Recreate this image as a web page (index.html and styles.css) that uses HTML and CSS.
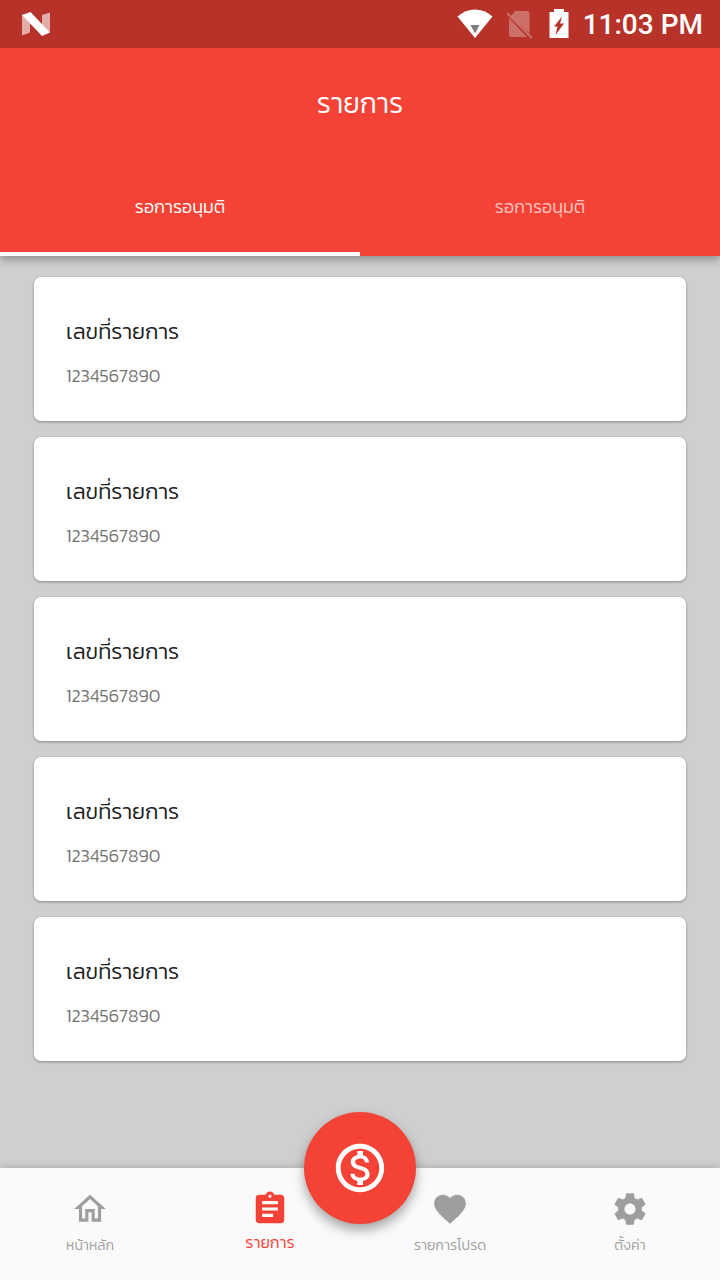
FILE: index.html
```html
<!DOCTYPE html>
<html lang="th">
<head>
<meta charset="utf-8">
<meta name="viewport" content="width=device-width, initial-scale=1">
<title>รายการ</title>
<link rel="stylesheet" href="styles.css">
</head>
<body>
<div class="app">
  <div class="status">
    <svg class="status-logo" width="30" height="26" viewBox="0 0 30 26" aria-hidden="true">
      <path d="M1 2v21.500l8-3V8z" fill="#fff" opacity=".6"/>
      <path d="M29 .5v20l-8-6V3z" fill="#fff" opacity=".6"/>
      <path d="M1 3l8.500-3L29 20.500 21 24z" fill="#fff"/>
    </svg>
    <div class="status-icons">
      <svg width="36" height="30" viewBox="0 0 36 30" aria-hidden="true">
        <path d="M.5 7.500C11-1.800 25-1.800 35.500 7.500L18 29z" fill="#fff"/>
        <path d="M13.500 16h9L18 24.500z" fill="#7d7f80"/>
      </svg>
      <svg width="28" height="30" viewBox="2 0 28 30" aria-hidden="true">
        <path d="M6 7l4-5h12a2.500 2.500 0 0 1 2.500 2.500V24.500zM4 9l18 19H6.500A2.500 2.500 0 0 1 4 25.500z" fill="#fff" opacity=".3"/>
        <path d="M2 4l25 25" fill="none" stroke="#fff" stroke-width="2" opacity=".3"/>
      </svg>
      <svg width="20" height="30" viewBox="0 0 20 30" aria-hidden="true">
        <path fill-rule="evenodd" d="M5 0h10v3h4.500V29H.5V3H5zM13 7.500L5 17.500h3.500L6.500 26 15 14.500h-4z" fill="#fff"/>
      </svg>
      <time class="clock">11:03 PM</time>
    </div>
  </div>

  <header class="header">
    <h1 class="title">รายการ</h1>
    <div class="tabs" role="tablist">
      <button class="tab tab-active" type="button" role="tab" aria-selected="true">รอการอนุมติ</button>
      <button class="tab" type="button" role="tab" aria-selected="false">รอการอนุมติ</button>
    </div>
  </header>

  <main class="content">
    <article class="card"><h2 class="card-title">เลขที่รายการ</h2><p class="card-text">1234567890</p></article>
    <article class="card"><h2 class="card-title">เลขที่รายการ</h2><p class="card-text">1234567890</p></article>
    <article class="card"><h2 class="card-title">เลขที่รายการ</h2><p class="card-text">1234567890</p></article>
    <article class="card"><h2 class="card-title">เลขที่รายการ</h2><p class="card-text">1234567890</p></article>
    <article class="card"><h2 class="card-title">เลขที่รายการ</h2><p class="card-text">1234567890</p></article>
  </main>

  <nav class="nav">
    <a class="nav-item" href="#home">
      <svg class="nav-icon" viewBox="0 0 24 24" aria-hidden="true"><path d="M12 5.690l5 4.500V18h-2v-6H9v6H7v-7.810l5-4.500M12 3L2 12h3v8h6v-6h2v6h6v-8h3L12 3z"/></svg>
      <span>หน้าหลัก</span>
    </a>
    <a class="nav-item nav-active" href="#list" aria-current="page">
      <svg class="nav-icon" viewBox="0 0 24 24" aria-hidden="true"><path d="M19 3h-4.180C14.400 1.840 13.300 1 12 1c-1.300 0-2.400.84-2.820 2H5c-1.100 0-2 .9-2 2v14c0 1.100.9 2 2 2h14c1.100 0 2-.9 2-2V5c0-1.100-.9-2-2-2zm-7 0c.55 0 1 .45 1 1s-.45 1-1 1-1-.45-1-1 .45-1 1-1zm2 14H7v-2h7v2zm3-4H7v-2h10v2zm0-4H7V7h10v2z"/></svg>
      <span>รายการ</span>
    </a>
    <a class="nav-item" href="#favorites">
      <svg class="nav-icon" viewBox="0 0 24 24" aria-hidden="true"><path d="M12 21.350l-1.450-1.320C5.400 15.360 2 12.280 2 8.500 2 5.420 4.420 3 7.500 3c1.740 0 3.410.81 4.500 2.090C13.090 3.810 14.760 3 16.500 3 19.580 3 22 5.420 22 8.500c0 3.780-3.400 6.860-8.550 11.540L12 21.350z"/></svg>
      <span>รายการโปรด</span>
    </a>
    <a class="nav-item" href="#settings">
      <svg class="nav-icon" viewBox="0 0 24 24" aria-hidden="true"><path d="M19.430 12.980c.04-.32.07-.64.07-.98s-.03-.66-.07-.98l2.110-1.650c.19-.15.24-.42.12-.64l-2-3.460c-.12-.22-.39-.3-.61-.22l-2.490 1c-.52-.4-1.080-.73-1.690-.98l-.38-2.650C14.460 2.180 14.250 2 14 2h-4c-.25 0-.46.18-.49.42l-.38 2.650c-.61.25-1.170.59-1.690.98l-2.490-1c-.23-.09-.49 0-.61.22l-2 3.460c-.13.22-.07.49.12.64l2.110 1.650c-.04.32-.07.65-.07.98s.03.66.07.98l-2.110 1.650c-.19.15-.24.42-.12.64l2 3.460c.12.22.39.3.61.22l2.490-1c.52.4 1.080.73 1.690.98l.38 2.650c.03.24.24.42.49.42h4c.25 0 .46-.18.49-.42l.38-2.650c.61-.25 1.170-.59 1.690-.98l2.490 1c.23.09.49 0 .61-.22l2-3.460c.12-.22.07-.49-.12-.64l-2.110-1.650zM12 15.500c-1.930 0-3.500-1.570-3.500-3.500s1.570-3.500 3.500-3.500 3.500 1.570 3.500 3.500-1.570 3.500-3.500 3.500z"/></svg>
      <span>ตั้งค่า</span>
    </a>
    <button class="fab" type="button" aria-label="ชำระเงิน">
      <svg class="fab-icon" viewBox="0 0 24 24" aria-hidden="true"><path d="M12 2C6.480 2 2 6.480 2 12s4.480 10 10 10 10-4.480 10-10S17.520 2 12 2zm0 18c-4.410 0-8-3.590-8-8s3.590-8 8-8 8 3.590 8 8-3.590 8-8 8zm.31-8.860c-1.770-.45-2.340-.94-2.340-1.670 0-.84.79-1.430 2.100-1.430 1.380 0 1.900.66 1.940 1.640h1.710c-.05-1.340-.87-2.570-2.490-2.970V5H10.900v1.690c-1.510.32-2.720 1.300-2.720 2.810 0 1.790 1.490 2.690 3.660 3.210 1.950.46 2.340 1.150 2.340 1.870 0 .53-.39 1.390-2.100 1.390-1.600 0-2.230-.72-2.320-1.640H8.040c.1 1.700 1.360 2.660 2.860 2.970V19h2.340v-1.670c1.520-.29 2.720-1.160 2.730-2.770-.01-2.200-1.900-2.960-3.660-3.420z"/></svg>
    </button>
  </nav>
</div>
</body>
</html>
```

FILE: styles.css
```css
* { box-sizing: border-box; }

body {
  margin: 0;
  font-family: Kanit, Prompt, "Noto Sans Thai", Lato, "Noto Sans", sans-serif;
  font-weight: 300;
}

.app {
  display: flex;
  flex-direction: column;
  min-height: 100vh;
  background: #cfcfcf;
}

.status {
  display: flex;
  align-items: center;
  justify-content: space-between;
  height: 48px;
  padding: 0 17px 0 21px;
  background: #b73229;
}

.status-logo { margin-top: 2px; }

.status-icons {
  display: flex;
  align-items: center;
  gap: 14px;
}

.clock {
  color: #fff;
  font: 500 28px/48px Roboto, sans-serif;
  padding-top: 2px;
}

.header {
  position: relative;
  background: #f44336;
  color: #fff;
  box-shadow: 0 4px 8px rgba(0, 0, 0, .3);
  clip-path: inset(0 0 -16px);
}

.title {
  margin: 0;
  padding-bottom: 2px;
  font-size: 28px;
  font-weight: 300;
  line-height: 110px;
  text-align: center;
}

.tabs { display: flex; }

.tab {
  flex: 1;
  height: 96px;
  padding: 0;
  border: 0;
  border-bottom: 4px solid transparent;
  background: none;
  color: rgba(255, 255, 255, .7);
  font: inherit;
  font-size: 18px;
}

.tab-active {
  border-bottom-color: #fff;
  color: #fff;
}

.content {
  flex: 1;
  display: flex;
  flex-direction: column;
  gap: 16px;
  padding: 21px 34px;
}

.card {
  padding: 35px 32px 31px;
  border-radius: 7px;
  background: #fff;
  box-shadow: 0 1px 3px rgba(0, 0, 0, .35);
}

.card-title {
  margin: 0;
  color: #212121;
  font-size: 22px;
  font-weight: 300;
  line-height: 40px;
}

.card-text {
  margin: 10px 0 0;
  color: #757575;
  font-size: 18px;
  line-height: 28px;
}

.nav {
  position: relative;
  display: flex;
  height: 112px;
  background: #fafafa;
  box-shadow: 0 0 8px rgba(0, 0, 0, .2);
}

.nav-item {
  flex: 1;
  display: flex;
  flex-direction: column;
  align-items: center;
  gap: 6px;
  padding-top: 22px;
  color: #9e9e9e;
  font-size: 14px;
  line-height: 24px;
  text-decoration: none;
}

.nav-active {
  gap: 2px;
  color: #f44336;
  font-size: 16px;
}

.nav-icon {
  width: 38px;
  height: 38px;
  fill: currentColor;
}

.fab {
  position: absolute;
  top: -56px;
  left: calc(50% - 56px);
  display: grid;
  place-items: center;
  width: 112px;
  height: 112px;
  padding: 0;
  border: 0;
  border-radius: 50%;
  background: #f44336;
  box-shadow: 0 6px 12px rgba(0, 0, 0, .35);
}

.fab-icon {
  width: 58px;
  height: 58px;
  fill: #fff;
}
```
